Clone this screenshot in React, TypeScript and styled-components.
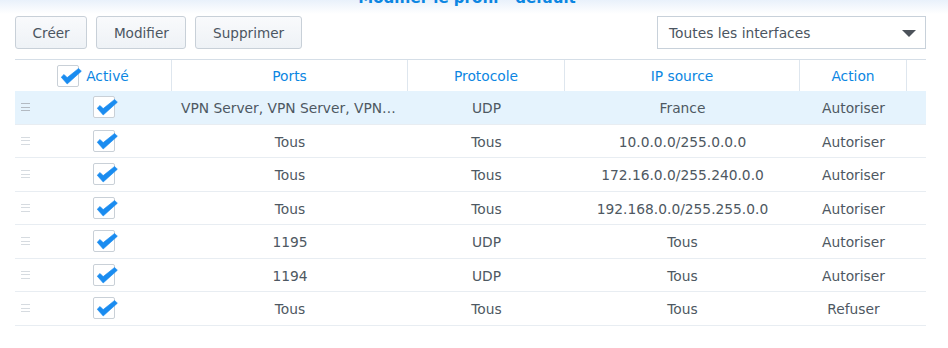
import React from "react";
import styled, { createGlobalStyle } from "styled-components";

const GlobalStyle = createGlobalStyle`
  html, body {
    margin: 0;
    padding: 0;
    background: #ffffff;
  }
  body {
    font-family: "DejaVu Sans", Verdana, sans-serif;
    font-size: 13.8px;
    color: #4e5862;
  }
  * { box-sizing: border-box; }
`;

const COLS = "20px 137px 236px 157px 235px 107px 19px";

const Page = styled.div`
  width: 948px;
  padding: 0 22px 0 15px;
`;

const TitleBar = styled.div`
  height: 14px;
  margin: 0 -22px 0 -15px;
  overflow: hidden;
  background: linear-gradient(to bottom, #e9f1fb 0%, #ffffff 100%);
  padding-right: 14px;
`;

const Title = styled.div`
  margin-top: -13px;
  line-height: 22px;
  font-size: 15px;
  font-weight: bold;
  text-align: center;
  color: #0c86e2;
`;

const Toolbar = styled.div`
  display: flex;
  justify-content: space-between;
  align-items: center;
  margin-top: 2px;
  height: 33px;
`;

const ButtonGroup = styled.div`
  display: flex;
  gap: 9px;
`;

const Button = styled.button`
  height: 33px;
  padding: 1px 16.6px 0;
  border: 1px solid #c8d0d8;
  border-radius: 3px;
  background: linear-gradient(to bottom, #f9fafc 0%, #eef2f6 100%);
  color: #4b5561;
  font-family: inherit;
  font-size: 13.6px;
  cursor: pointer;
`;

const Select = styled.div`
  width: 269px;
  height: 33px;
  border: 1px solid #c8d1da;
  background: #ffffff;
  display: flex;
  align-items: center;
  justify-content: space-between;
  padding: 1px 9px 0 11px;
  color: #4b5561;
`;

const Arrow = styled.span`
  width: 0;
  height: 0;
  border-left: 7px solid transparent;
  border-right: 7px solid transparent;
  border-top: 7px solid #4c525a;
`;

const Table = styled.div`
  margin-top: 10px;
  width: 911px;
`;

const HeaderRow = styled.div`
  display: grid;
  grid-template-columns: ${COLS};
  height: 32px;
  border-top: 1px solid #d5dee7;
`;

const HeaderCell = styled.div<{ $span?: number; $last?: boolean }>`
  grid-column: span ${(p) => p.$span || 1};
  display: flex;
  align-items: center;
  justify-content: center;
  gap: 7px;
  color: #0c86e2;
  border-right: ${(p) => (p.$last ? "none" : "1px solid #dee6ee")};
  white-space: nowrap;
`;

const Row = styled.div<{ $selected?: boolean }>`
  display: grid;
  grid-template-columns: ${COLS};
  height: 33.5px;
  border-bottom: 1px solid #e8edf2;
  background: ${(p) => (p.$selected ? "#e5f3fd" : "#ffffff")};
`;

const Cell = styled.div`
  display: flex;
  align-items: center;
  justify-content: center;
  min-width: 0;
`;

const TextCell = styled.div`
  align-self: center;
  text-align: center;
  padding: 2px 9px 0;
  white-space: nowrap;
  overflow: hidden;
  text-overflow: ellipsis;
  color: #4e5862;
`;

const Handle = styled.span<{ $dark?: boolean }>`
  width: 9px;
  height: 8px;
  border-top: 1px solid ${(p) => (p.$dark ? "#b3bac2" : "#d6dbe0")};
  border-bottom: 1px solid ${(p) => (p.$dark ? "#b3bac2" : "#d6dbe0")};
  background: linear-gradient(
      ${(p) => (p.$dark ? "#b3bac2" : "#d6dbe0")},
      ${(p) => (p.$dark ? "#b3bac2" : "#d6dbe0")}
    )
    center / 100% 1px no-repeat;
`;

const CheckBox = styled.span`
  position: relative;
  display: inline-block;
  width: 22px;
  height: 22px;
  border: 1px solid #c9d0d7;
  border-radius: 2px;
  background: #ffffff;
  flex: none;
`;

const CheckMark = styled.svg`
  position: absolute;
  left: -1px;
  top: -1px;
  overflow: visible;
`;

const Check = () => (
  <CheckBox>
    <CheckMark width="26" height="22" viewBox="0 0 26 22">
      <path
        d="M4.2 12.2 L7 9.4 L10.2 12.6 L21.6 3.4 L24.4 6.2 L10.2 19 Z"
        fill="#1a8cf0"
        stroke="#1a8cf0"
        strokeWidth="0.6"
        strokeLinejoin="round"
      />
    </CheckMark>
  </CheckBox>
);

type Rule = {
  ports: string;
  proto: string;
  ip: string;
  action: string;
};

const rules: Rule[] = [
  { ports: "VPN Server, VPN Server, VPN Server", proto: "UDP", ip: "France", action: "Autoriser" },
  { ports: "Tous", proto: "Tous", ip: "10.0.0.0/255.0.0.0", action: "Autoriser" },
  { ports: "Tous", proto: "Tous", ip: "172.16.0.0/255.240.0.0", action: "Autoriser" },
  { ports: "Tous", proto: "Tous", ip: "192.168.0.0/255.255.0.0", action: "Autoriser" },
  { ports: "1195", proto: "UDP", ip: "Tous", action: "Autoriser" },
  { ports: "1194", proto: "UDP", ip: "Tous", action: "Autoriser" },
  { ports: "Tous", proto: "Tous", ip: "Tous", action: "Refuser" },
];

export default function App() {
  return (
    <>
      <GlobalStyle />
      <Page>
        <TitleBar>
          <Title>Modifier le profil - default</Title>
        </TitleBar>
        <Toolbar>
          <ButtonGroup>
            <Button>Créer</Button>
            <Button>Modifier</Button>
            <Button>Supprimer</Button>
          </ButtonGroup>
          <Select>
            <span>Toutes les interfaces</span>
            <Arrow />
          </Select>
        </Toolbar>
        <Table>
          <HeaderRow>
            <HeaderCell $span={2}>
              <Check />
              <span>Activé</span>
            </HeaderCell>
            <HeaderCell>Ports</HeaderCell>
            <HeaderCell>Protocole</HeaderCell>
            <HeaderCell>IP source</HeaderCell>
            <HeaderCell>Action</HeaderCell>
            <HeaderCell $last />
          </HeaderRow>
          {rules.map((r, i) => (
            <Row key={i} $selected={i === 0}>
              <Cell>
                <Handle $dark={i === 0} />
              </Cell>
              <Cell>
                <Check />
              </Cell>
              <TextCell>{r.ports}</TextCell>
              <TextCell>{r.proto}</TextCell>
              <TextCell>{r.ip}</TextCell>
              <TextCell>{r.action}</TextCell>
              <Cell />
            </Row>
          ))}
        </Table>
      </Page>
    </>
  );
}
